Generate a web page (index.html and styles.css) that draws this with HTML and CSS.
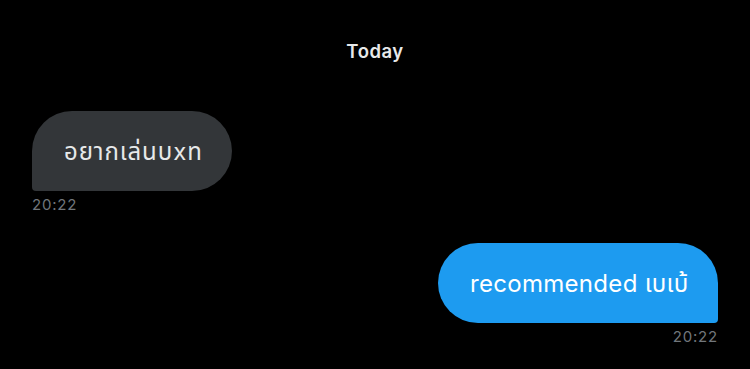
FILE: index.html
```html
<!DOCTYPE html>
<html lang="th">
<head>
<meta charset="utf-8">
<link rel="stylesheet" href="styles.css">
</head>
<body>
<div class="chat">
  <div class="day">Today</div>
  <div class="msg in">
    <div class="bubble">อยากเล่นบxท</div>
    <div class="time">20:22</div>
  </div>
  <div class="msg out">
    <div class="bubble">recommended เบเบ้</div>
    <div class="time">20:22</div>
  </div>
</div>
</body>
</html>
```
FILE: styles.css
```css
html, body {
  margin: 0;
  padding: 0;
  background: #000;
}
body {
  font-family: "Inter", "Noto Sans", "Noto Sans Thai", "Loma", "Garuda", "DejaVu Sans", sans-serif;
  width: 750px;
  height: 369px;
  overflow: hidden;
}
.chat {
  display: flex;
  flex-direction: column;
  padding: 0 32px;
}
.day {
  align-self: center;
  padding-top: 41px;
  font-size: 18.5px;
  line-height: 20px;
  font-weight: 600;
  letter-spacing: 0.5px;
  color: #e7e9ea;
}
.msg {
  display: flex;
  flex-direction: column;
}
.msg.in {
  align-items: flex-start;
  margin-top: 50px;
}
.msg.out {
  align-items: flex-end;
  margin-top: 28px;
}
.bubble {
  box-sizing: border-box;
  height: 80px;
  display: flex;
  align-items: center;
  padding: 2px 32px 0;
  font-size: 24px;
  line-height: 28px;
  white-space: nowrap;
}
.in .bubble {
  background: #333639;
  color: #e7e9ea;
  border-radius: 40px 40px 40px 4px;
  width: 200px;
  letter-spacing: 0.9px;
}
.out .bubble {
  background: #1d9bf0;
  color: #fff;
  border-radius: 40px 40px 4px 40px;
  width: 280px;
  letter-spacing: 0.3px;
}
.time {
  margin-top: 4px;
  font-size: 15px;
  line-height: 20px;
  color: #71767b;
  letter-spacing: 0.8px;
}
```
